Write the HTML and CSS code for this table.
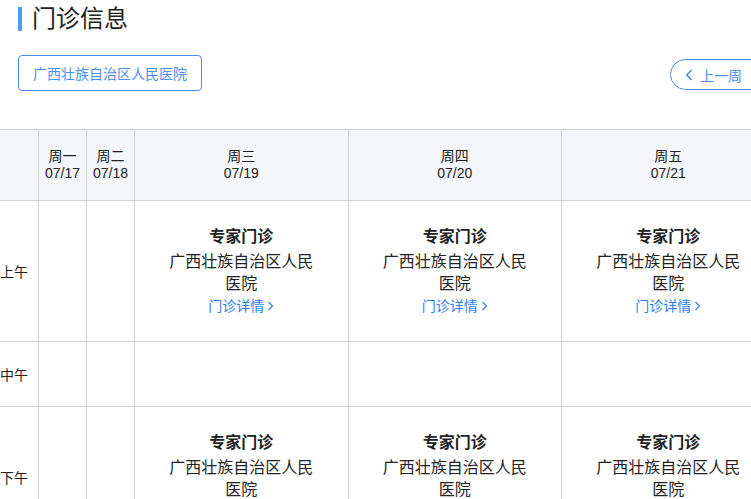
FILE: index.html
```html
<!DOCTYPE html>
<html lang="zh-CN">
<head>
<meta charset="utf-8">
<title>门诊信息</title>
<link rel="stylesheet" href="styles.css">
</head>
<body>
<div class="page">
  <h1 class="title">门诊信息</h1>
  <div class="toolbar">
    <button class="hospital-btn">广西壮族自治区人民医院</button>
    <button class="week-btn"><svg class="chev" width="8" height="12" viewBox="0 0 8 12"><path d="M6.5 1 L1.8 6 L6.5 11" fill="none" stroke="currentColor" stroke-width="1.6"/></svg>上一周</button>
  </div>
  <table class="schedule">
    <colgroup>
      <col class="c-label"><col class="c-narrow"><col class="c-narrow"><col class="c-wide"><col class="c-wide"><col class="c-wide"><col class="c-wide"><col class="c-wide">
    </colgroup>
    <thead>
      <tr>
        <th></th>
        <th>周一<br>07/17</th>
        <th>周二<br>07/18</th>
        <th>周三<br>07/19</th>
        <th>周四<br>07/20</th>
        <th>周五<br>07/21</th>
        <th>周六<br>07/22</th>
        <th>周日<br>07/23</th>
      </tr>
    </thead>
    <tbody>
      <tr class="row-tall">
        <td class="label">上午</td>
        <td></td><td></td>
        <td><div class="slot"><div class="slot-title">专家门诊</div><div class="slot-hosp">广西壮族自治区人民医院</div><a class="slot-link">门诊详情<svg width="7" height="10" viewBox="0 0 7 10"><path d="M1.5 1 L5.5 5 L1.5 9" fill="none" stroke="currentColor" stroke-width="1.2"/></svg></a></div></td>
        <td><div class="slot"><div class="slot-title">专家门诊</div><div class="slot-hosp">广西壮族自治区人民医院</div><a class="slot-link">门诊详情<svg width="7" height="10" viewBox="0 0 7 10"><path d="M1.5 1 L5.5 5 L1.5 9" fill="none" stroke="currentColor" stroke-width="1.2"/></svg></a></div></td>
        <td><div class="slot"><div class="slot-title">专家门诊</div><div class="slot-hosp">广西壮族自治区人民医院</div><a class="slot-link">门诊详情<svg width="7" height="10" viewBox="0 0 7 10"><path d="M1.5 1 L5.5 5 L1.5 9" fill="none" stroke="currentColor" stroke-width="1.2"/></svg></a></div></td>
        <td></td><td></td>
      </tr>
      <tr class="row-short">
        <td class="label">中午</td>
        <td></td><td></td><td></td><td></td><td></td><td></td><td></td>
      </tr>
      <tr class="row-tall">
        <td class="label">下午</td>
        <td></td><td></td>
        <td><div class="slot"><div class="slot-title">专家门诊</div><div class="slot-hosp">广西壮族自治区人民医院</div><a class="slot-link">门诊详情<svg width="7" height="10" viewBox="0 0 7 10"><path d="M1.5 1 L5.5 5 L1.5 9" fill="none" stroke="currentColor" stroke-width="1.2"/></svg></a></div></td>
        <td><div class="slot"><div class="slot-title">专家门诊</div><div class="slot-hosp">广西壮族自治区人民医院</div><a class="slot-link">门诊详情<svg width="7" height="10" viewBox="0 0 7 10"><path d="M1.5 1 L5.5 5 L1.5 9" fill="none" stroke="currentColor" stroke-width="1.2"/></svg></a></div></td>
        <td><div class="slot"><div class="slot-title">专家门诊</div><div class="slot-hosp">广西壮族自治区人民医院</div><a class="slot-link">门诊详情<svg width="7" height="10" viewBox="0 0 7 10"><path d="M1.5 1 L5.5 5 L1.5 9" fill="none" stroke="currentColor" stroke-width="1.2"/></svg></a></div></td>
        <td></td><td></td>
      </tr>
    </tbody>
  </table>
</div>
</body>
</html>
```

FILE: styles.css
```css
html, body {
  margin: 0;
  padding: 0;
  overflow: hidden;
  background: #fff;
}
body {
  font-family: "Liberation Sans", "Noto Sans CJK SC", sans-serif;
  color: #222;
}
.page {
  width: 1300px;
  padding-top: 7px;
}
.title {
  margin: 0 0 0 18px;
  padding-left: 10px;
  border-left: 4px solid #4a9ef0;
  font-size: 24px;
  line-height: 24px;
  font-weight: normal;
  color: #222;
  height: 24px;
}
.toolbar {
  display: flex;
  align-items: flex-start;
  justify-content: space-between;
  width: 752px;
  padding-left: 18px;
  margin-top: 24px;
}
.hospital-btn {
  height: 36px;
  width: 184px;
  padding: 0;
  border: 1px solid #4a8ff0;
  border-radius: 4px;
  background: #fff;
  color: #4a8ff0;
  font-family: "Liberation Sans", "Noto Sans CJK SC", sans-serif;
  font-size: 14px;
}
.week-btn {
  margin-top: 4px;
  height: 31px;
  width: 100px;
  padding: 0 0 0 14px;
  display: flex;
  align-items: center;
  gap: 7px;
  border: 1px solid #4a8ff0;
  border-radius: 16px;
  background: #fff;
  color: #4a8ff0;
  font-family: "Liberation Sans", "Noto Sans CJK SC", sans-serif;
  font-size: 14px;
}
.schedule {
  margin-top: 38px;
  margin-left: -11px;
  border-collapse: collapse;
  table-layout: fixed;
  width: 1212.5px;
  font-size: 14px;
}
.c-label { width: 49px; }
.c-narrow { width: 48px; }
.c-wide { width: 213.5px; }
.schedule th, .schedule td {
  border: 1px solid #d2d2d2;
  padding: 0;
  text-align: center;
  vertical-align: middle;
}
.schedule th {
  background: #f5f6fa;
  font-weight: normal;
  height: 70px;
  line-height: 17px;
  color: #222;
}
.row-tall td { height: 140px; }
.row-short td { height: 64px; }
.label {
  font-size: 14px;
  color: #222;
}
.slot {
  padding: 0 30px;
  line-height: 22px;
}
.slot-title {
  font-size: 16px;
  font-weight: bold;
  color: #222;
  margin-bottom: 3px;
}
.slot-hosp {
  font-size: 16px;
  color: #222;
}
.slot-link {
  display: inline-flex;
  align-items: center;
  gap: 3px;
  font-size: 14px;
  color: #2d7ff0;
  cursor: pointer;
}
```
